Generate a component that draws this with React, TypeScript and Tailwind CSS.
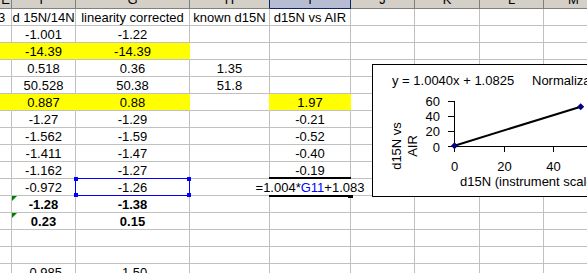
import React from "react";

type RowDef = {
  e?: string;
  f?: string;
  g?: string;
  h?: string;
  i?: string;
  yel?: boolean;
  iYel?: boolean;
  bold?: boolean;
  tri?: boolean;
  sel?: boolean;
  formula?: boolean;
};

const ROWS: RowDef[] = [
  { e: "3", f: "d 15N/14N", g: "linearity corrected", h: "known d15N", i: "d15N vs AIR" },
  { f: "-1.001", g: "-1.22" },
  { f: "-14.39", g: "-14.39", yel: true },
  { f: "0.518", g: "0.36", h: "1.35" },
  { f: "50.528", g: "50.38", h: "51.8" },
  { f: "0.887", g: "0.88", i: "1.97", yel: true, iYel: true },
  { f: "-1.27", g: "-1.29", i: "-0.21" },
  { f: "-1.562", g: "-1.59", i: "-0.52" },
  { f: "-1.411", g: "-1.47", i: "-0.40" },
  { f: "-1.162", g: "-1.27", i: "-0.19" },
  { f: "-0.972", g: "-1.26", sel: true, formula: true },
  { f: "-1.28", g: "-1.38", bold: true, tri: true },
  { f: "0.23", g: "0.15", bold: true, tri: true },
  {},
  {},
  { f: "-0.985", g: "-1.50" },
];

const base =
  "relative shrink-0 h-[17px] border-r border-b border-b-[#c0c0c0] text-center leading-[18px] whitespace-nowrap";

function Triangle() {
  return (
    <svg className="absolute left-0 top-0" width="5" height="5" viewBox="0 0 5 5">
      <polygon points="0,0 5,0 0,5" fill="#008000" />
    </svg>
  );
}

function Row({ r }: { r: RowDef }) {
  const yel = r.yel ? "bg-[#ffff00] border-r-[#ffff00]" : "border-r-[#c0c0c0]";
  return (
    <div className={`flex ${r.bold ? "font-bold" : ""}`}>
      {/* E */}
      <div className={`${base} w-[12px] overflow-hidden text-left ${yel}`}>
        {r.e ? <span className="block -ml-[2px]">{r.e}</span> : null}
      </div>
      {/* F */}
      <div className={`${base} w-[64px] ${yel}`}>
        {r.tri ? <Triangle /> : null}
        {r.f}
      </div>
      {/* G */}
      <div className={`${base} w-[114px] ${yel}`}>
        {r.g}
        {r.sel ? (
          <div className="absolute -left-[1px] -top-[1px] -right-[1px] -bottom-[1px] border border-[#0000ff] z-10">
            <div className="absolute -left-[2px] -top-[2px] w-[4px] h-[4px] bg-[#0000ff]" />
            <div className="absolute -right-[2px] -top-[2px] w-[4px] h-[4px] bg-[#0000ff]" />
            <div className="absolute -left-[2px] -bottom-[2px] w-[4px] h-[4px] bg-[#0000ff]" />
            <div className="absolute -right-[2px] -bottom-[2px] w-[4px] h-[4px] bg-[#0000ff]" />
          </div>
        ) : null}
      </div>
      {/* H */}
      <div className={`${base} w-[80px] ${r.iYel ? "border-r-[#ffff00]" : "border-r-[#c0c0c0]"}`}>{r.h}</div>
      {/* I */}
      <div
        className={`${base} w-[81px] ${r.iYel ? "bg-[#ffff00] border-r-[#ffff00]" : "border-r-[#c0c0c0]"} ${
          r.formula ? "flex justify-center items-start" : ""
        }`}
      >
        {r.formula ? (
          <>
            <span className="relative z-10 h-[16px] bg-white px-[1px] leading-[18px] whitespace-nowrap">
              =1.004*<span className="text-[#0000ff]">G11</span>+1.083
            </span>
            <div className="absolute -top-[2px] -left-[1px] -right-[1px] h-[2px] bg-black z-20" />
            <div className="absolute -bottom-[2px] -left-[1px] right-[2px] h-[2px] bg-black z-20" />
            <div className="absolute -bottom-[3px] -right-[3px] w-[5px] h-[3px] bg-black z-20" />
          </>
        ) : (
          r.i
        )}
      </div>
      <div className={`${base} w-[64px] border-r-[#c0c0c0]`} />
      <div className={`${base} w-[65px] border-r-[#c0c0c0]`} />
      <div className={`${base} w-[64px] border-r-[#c0c0c0]`} />
      <div className={`${base} w-[60px] border-r-[#c0c0c0]`} />
    </div>
  );
}

const hbase =
  "shrink-0 h-[17px] border-r border-b text-center leading-[16px] bg-[#d4d0c8] border-b-[#808080]";

function Chart() {
  const ylabels = [
    { v: "60", y: 40.5 },
    { v: "40", y: 56 },
    { v: "20", y: 71 },
    { v: "0", y: 86.5 },
  ];
  const yticks = [36.5, 51.5, 66.5, 81.5];
  const xt = [
    { v: "0", x: 81.5 },
    { v: "20", x: 131.5 },
    { v: "40", x: 180.5 },
  ];
  const diamond = (cx: number, cy: number) =>
    `${cx},${cy - 3.5} ${cx + 3.5},${cy} ${cx},${cy + 3.5} ${cx - 3.5},${cy}`;
  return (
    <div className="absolute left-[372px] top-[64px] w-[240px] h-[133px] border border-black bg-white z-30">
      <svg
        className="absolute left-0 top-0"
        width="238"
        height="131"
        fontFamily="'Liberation Sans', Arial, sans-serif"
        fontSize="13"
        fill="#000"
      >
        <text x="19" y="19.5">y = 1.0040x + 1.0825</text>
        <text x="159" y="19.5">Normalization</text>
        {ylabels.map((l) => (
          <text key={l.v} x="67" y={l.y} textAnchor="end">
            {l.v}
          </text>
        ))}
        <line x1="81.5" y1="36" x2="81.5" y2="82" stroke="#000" strokeWidth="1" />
        {yticks.map((t) => (
          <line key={t} x1="75" y1={t} x2="82" y2={t} stroke="#000" strokeWidth="1" />
        ))}
        <line x1="81" y1="81.5" x2="238" y2="81.5" stroke="#000" strokeWidth="1" />
        {xt.map((t) => (
          <line key={t.v} x1={t.x} y1="81" x2={t.x} y2="87" stroke="#000" strokeWidth="1" />
        ))}
        {xt.map((t) => (
          <text key={t.v} x={t.x} y="105.5" textAnchor="middle">
            {t.v}
          </text>
        ))}
        <text x="87" y="121">d15N (instrument scale)</text>
        <text transform="translate(28,81) rotate(-90)" textAnchor="middle">
          d15N vs
        </text>
        <text transform="translate(44,81) rotate(-90)" textAnchor="middle">
          AIR
        </text>
        <line x1="81.5" y1="80.7" x2="207.7" y2="41.7" stroke="#000" strokeWidth="2" />
        <polygon points={diamond(81.5, 80.7)} fill="#000080" />
        <polygon points={diamond(207.7, 41.7)} fill="#000080" />
      </svg>
    </div>
  );
}

export default function App() {
  return (
    <div className="relative w-[587px] h-[273px] overflow-hidden bg-white text-black text-[13px] font-['Liberation_Sans',Arial,sans-serif]">
      <div className="flex flex-col w-[604px]">
        <div className="flex -mt-[8px]">
          <div className={`${hbase} w-[12px] border-r-[#808080]`}>E</div>
          <div className={`${hbase} w-[64px] border-r-[#808080]`}>F</div>
          <div className={`${hbase} w-[114px] border-r-[#808080]`}>G</div>
          <div className={`${hbase} w-[80px] border-r-[#0a246a]`}>H</div>
          <div className="shrink-0 h-[17px] w-[81px] border-r border-b text-center leading-[16px] bg-[#b6bdd2] border-r-[#0a246a] border-b-[#0a246a]">
            I
          </div>
          <div className={`${hbase} w-[64px] border-r-[#808080]`}>J</div>
          <div className={`${hbase} w-[65px] border-r-[#808080]`}>K</div>
          <div className={`${hbase} w-[64px] border-r-[#808080]`}>L</div>
          <div className={`${hbase} w-[60px] border-r-[#808080]`}>M</div>
        </div>
        {ROWS.map((r, idx) => (
          <Row key={idx} r={r} />
        ))}
      </div>
      <Chart />
    </div>
  );
}
